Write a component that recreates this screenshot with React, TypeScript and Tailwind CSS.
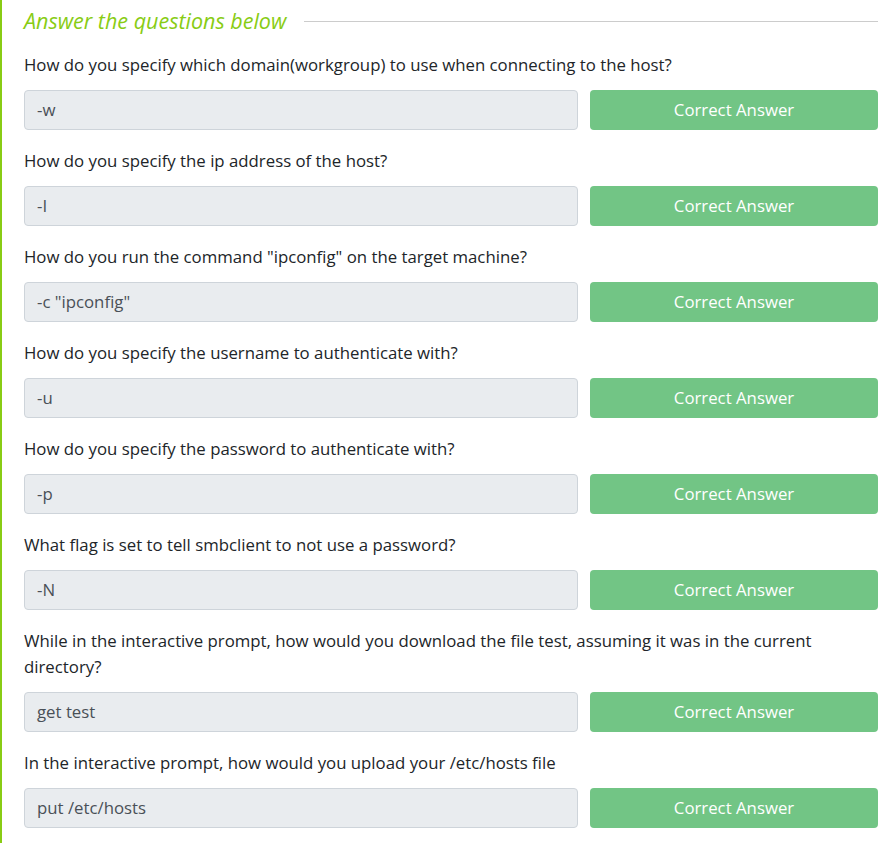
import React from "react";

const questions = [
  { q: "How do you specify which domain(workgroup) to use when connecting to the host?", a: "-w" },
  { q: "How do you specify the ip address of the host?", a: "-I" },
  { q: 'How do you run the command "ipconfig" on the target machine?', a: '-c "ipconfig"' },
  { q: "How do you specify the username to authenticate with?", a: "-u" },
  { q: "How do you specify the password to authenticate with?", a: "-p" },
  { q: "What flag is set to tell smbclient to not use a password?", a: "-N" },
  {
    q: "While in the interactive prompt, how would you download the file test, assuming it was in the current directory?",
    a: "get test",
  },
  { q: "In the interactive prompt, how would you upload your /etc/hosts file", a: "put /etc/hosts" },
];

export default function App() {
  return (
    <div className="min-h-[843px] bg-white font-['Open_Sans',sans-serif]">
      <div className="border-l-2 border-[#88cc14] pl-[22px] pr-4 pb-4">
        {/* Heading */}
        <div className="flex items-center gap-[18px] pt-[7px] h-[34px]">
          <h3 className="italic text-[21.5px] leading-[26px] text-[#88cc14] whitespace-nowrap">
            Answer the questions below
          </h3>
          <div className="flex-1 h-px bg-[#cccccc] mt-[1px]" />
        </div>

        <div className="pt-[18px]">
          {questions.map((item) => (
            <div key={item.a} className="mb-[18px]">
              <p className="text-[16.8px] leading-[26px] text-[#212529] mb-3 pr-6">{item.q}</p>
              <div className="flex gap-3">
                <div className="flex-1 h-10 rounded bg-[#e9ecef] border border-[#ced4da] px-3 flex items-center text-[16.8px] text-[#495057]">
                  {item.a}
                </div>
                <button className="w-[288px] h-10 rounded bg-[#72c585] text-white text-[16.8px]">
                  Correct Answer
                </button>
              </div>
            </div>
          ))}
        </div>
      </div>
    </div>
  );
}
